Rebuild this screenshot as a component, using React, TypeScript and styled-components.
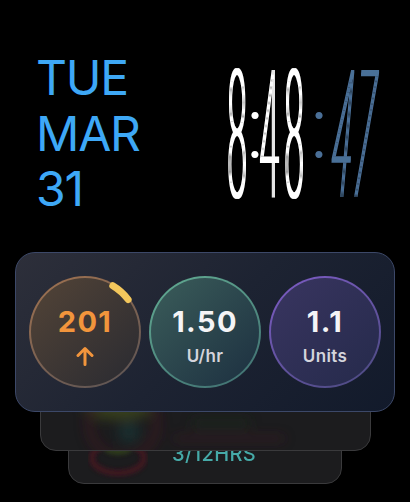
import React from "react";
import styled, { createGlobalStyle } from "styled-components";

const GlobalStyle = createGlobalStyle`
  html, body {
    margin: 0;
    padding: 0;
    background: #000;
  }
  body {
    width: 410px;
    height: 502px;
    overflow: hidden;
    font-family: "Inter", "Noto Sans", sans-serif;
  }
`;

const Screen = styled.div`
  width: 410px;
  height: 502px;
  background: #000;
  display: flex;
  flex-direction: column;
`;

const Header = styled.div`
  display: flex;
  justify-content: space-between;
  align-items: flex-start;
  padding: 50px 35px 0 36px;
`;

const DateBlock = styled.div`
  display: flex;
  flex-direction: column;
  color: #3ea8f6;
  font-family: "Inter", sans-serif;
  font-weight: 400;
  font-size: 48px;
  line-height: 55.5px;
  letter-spacing: -1.2px;
`;

const ClockFace = styled.svg`
  display: block;
  width: 150px;
  height: 127px;
  margin-top: 20px;
  overflow: visible;
`;

const Numeral = styled.text`
  font-family: "Roboto", sans-serif;
  font-stretch: 75%;
  font-weight: 100;
  font-size: 60px;
`;

const ColonMark = styled.text`
  font-family: "Roboto", sans-serif;
  font-weight: 300;
  font-size: 86px;
`;

const Stack = styled.div`
  display: flex;
  flex-direction: column;
  align-items: center;
  margin-top: 35px;
`;

const FrontCard = styled.div`
  position: relative;
  z-index: 3;
  width: 380px;
  box-sizing: border-box;
  display: flex;
  gap: 8px;
  padding: 23px 13px;
  border-radius: 20px;
  border: 1.5px solid #3c4868;
  background: linear-gradient(135deg, #2d2f3a 0%, #1d2332 50%, #121a2b 100%);
`;

type Tint = {
  fill: [string, string];
  ring: [string, string];
};

const tints: Record<string, Tint> = {
  glucose: { fill: ["#534437", "#292a31"], ring: ["#a27350", "#585254"] },
  basal: { fill: ["#3b5d5a", "#1c2f40"], ring: ["#63ad93", "#3f6d70"] },
  bolus: { fill: ["#393560", "#252a4b"], ring: ["#7e5cc6", "#4a4a7e"] },
};

const Dial = styled.div<{ $tint: Tint }>`
  position: relative;
  width: 112px;
  height: 112px;
  box-sizing: border-box;
  border-radius: 50%;
  border: 2px solid transparent;
  background:
    linear-gradient(135deg, ${(p) => p.$tint.fill[0]}, ${(p) => p.$tint.fill[1]}) padding-box,
    linear-gradient(150deg, ${(p) => p.$tint.ring[0]}, ${(p) => p.$tint.ring[1]}) border-box;
  display: flex;
  flex-direction: column;
  align-items: center;
  justify-content: center;
  gap: 12px;
  padding-top: 9px;
`;

const Value = styled.div<{ $color: string }>`
  font-family: "Inter", sans-serif;
  font-weight: 700;
  font-size: 29px;
  line-height: 29px;
  color: ${(p) => p.$color};
  letter-spacing: 1.4px;
`;

const Unit = styled.div`
  font-family: "Inter", sans-serif;
  font-weight: 600;
  font-size: 17px;
  line-height: 17px;
  color: #d4d4dc;
  letter-spacing: 0.4px;
`;

const TrendArrow = styled.svg`
  display: block;
  width: 18px;
  height: 20px;
  margin-top: -2px;
  margin-bottom: -1px;
`;

const Arc = styled.svg`
  position: absolute;
  left: -2px;
  top: -2px;
  width: 112px;
  height: 112px;
`;

const BackCard = styled.div<{ $w: number; $h: number; $overlap: number; $z: number }>`
  position: relative;
  z-index: ${(p) => p.$z};
  width: ${(p) => p.$w}px;
  height: ${(p) => p.$h}px;
  margin-top: -${(p) => p.$overlap}px;
  box-sizing: border-box;
  border-radius: 16px;
  border: 1.5px solid #3a3a3c;
  background: #1c1c1e;
  overflow: hidden;
  display: flex;
  align-items: flex-end;
`;

const Blur = styled.svg`
  display: block;
  flex: none;
`;

const HoursRow = styled.div`
  display: flex;
  align-items: flex-end;
  gap: 24px;
  padding: 0 0 19px 19px;
`;

const Hours = styled.span`
  font-family: "Inter", sans-serif;
  font-weight: 500;
  font-size: 20px;
  line-height: 20px;
  color: #46aaa8;
  letter-spacing: 0.4px;
  filter: blur(0.3px);
`;

const describeArc = (cx: number, cy: number, r: number, a0: number, a1: number) => {
  const pt = (a: number) => {
    const rad = ((a - 90) * Math.PI) / 180;
    return [cx + r * Math.cos(rad), cy + r * Math.sin(rad)];
  };
  const [x0, y0] = pt(a0);
  const [x1, y1] = pt(a1);
  return `M ${x0} ${y0} A ${r} ${r} 0 0 1 ${x1} ${y1}`;
};

const WHITE = "#ffffff";
const STEEL = "#4a6f97";

// x = centre of each glyph inside the clock face
const digits = [
  { ch: "8", x: 12, tone: WHITE },
  { ch: "4", x: 44, tone: WHITE },
  { ch: "8", x: 69, tone: WHITE },
  { ch: "4", x: 112.5, tone: STEEL, slant: true },
  { ch: "7", x: 134.5, tone: STEEL, slant: true },
];
const colons = [
  { x: 30, tone: WHITE },
  { x: 94, tone: STEEL },
];

export default function App() {
  return (
    <>
      <GlobalStyle />
      <Screen>
        <Header>
          <DateBlock>
            <span>TUE</span>
            <span>MAR</span>
            <span>31</span>
          </DateBlock>
          <ClockFace viewBox="0 0 150 127">
            <defs>
              <filter id="thicken" x="-20%" y="-10%" width="140%" height="120%">
                <feMorphology operator="dilate" radius="1.1" />
              </filter>
            </defs>
            <g filter="url(#thicken)">
              {digits.map((d, i) => (
                <Numeral
                  key={i}
                  transform={`translate(${d.x} 126) ${d.slant ? "skewX(-5)" : ""} scale(0.68 2.93)`}
                  textAnchor="middle"
                  fill={d.tone}
                >
                  {d.ch}
                </Numeral>
              ))}
            </g>
            {colons.map((c, i) => (
              <ColonMark key={i} x={c.x} y={88} textAnchor="middle" fill={c.tone}>
                :
              </ColonMark>
            ))}
          </ClockFace>
        </Header>

        <Stack>
          <FrontCard>
            <Dial $tint={tints.glucose}>
              <Arc viewBox="0 0 112 112">
                <path
                  d={describeArc(56, 56, 54, 31, 53)}
                  fill="none"
                  stroke="#f3c75c"
                  strokeWidth={7}
                  strokeLinecap="round"
                />
              </Arc>
              <Value $color="#f2953c">201</Value>
              <TrendArrow viewBox="0 0 18 20">
                <path
                  d="M9 18.5 V2.5 M2 9.5 L9 2.5 L16 9.5"
                  fill="none"
                  stroke="#f2953c"
                  strokeWidth={3}
                  strokeLinecap="round"
                  strokeLinejoin="round"
                />
              </TrendArrow>
            </Dial>
            <Dial $tint={tints.basal}>
              <Value $color="#f4f4f6">1.50</Value>
              <Unit>U/hr</Unit>
            </Dial>
            <Dial $tint={tints.bolus}>
              <Value $color="#f4f4f6">1.1</Value>
              <Unit>Units</Unit>
            </Dial>
          </FrontCard>

          <BackCard $w={331} $h={90} $overlap={51} $z={2}>
            <Blur width="331" height="90" viewBox="0 0 331 90">
              <defs>
                <filter id="soft" x="-50%" y="-50%" width="200%" height="200%">
                  <feGaussianBlur stdDeviation="6" />
                </filter>
              </defs>
              <g filter="url(#soft)" opacity="0.55">
                <ellipse cx="78" cy="46" rx="36" ry="14" fill="#4d5c1c" />
                <circle cx="82" cy="64" r="34" fill="none" stroke="#4a1820" strokeWidth="7" />
                <circle cx="88" cy="72" r="11" fill="#173c3c" />
                <rect x="132" y="76" width="112" height="5" rx="2.5" fill="#4a1c26" />
                <rect x="150" y="58" width="60" height="10" rx="5" fill="#1f2a1a" />
              </g>
            </Blur>
          </BackCard>

          <BackCard $w={274} $h={80} $overlap={47} $z={1}>
            <HoursRow>
              <Blur width="60" height="34" viewBox="0 0 60 34" style={{ marginBottom: -16 }}>
                <defs>
                  <filter id="soft2" x="-50%" y="-50%" width="200%" height="200%">
                    <feGaussianBlur stdDeviation="2" />
                  </filter>
                </defs>
                <g filter="url(#soft2)" opacity="0.75">
                  <ellipse cx="30" cy="12" rx="26" ry="15" fill="none" stroke="#4e1824" strokeWidth="6" />
                  <ellipse cx="30" cy="4" rx="13" ry="5" fill="#34461a" />
                </g>
              </Blur>
              <Hours>3/12HRS</Hours>
            </HoursRow>
          </BackCard>
        </Stack>
      </Screen>
    </>
  );
}
